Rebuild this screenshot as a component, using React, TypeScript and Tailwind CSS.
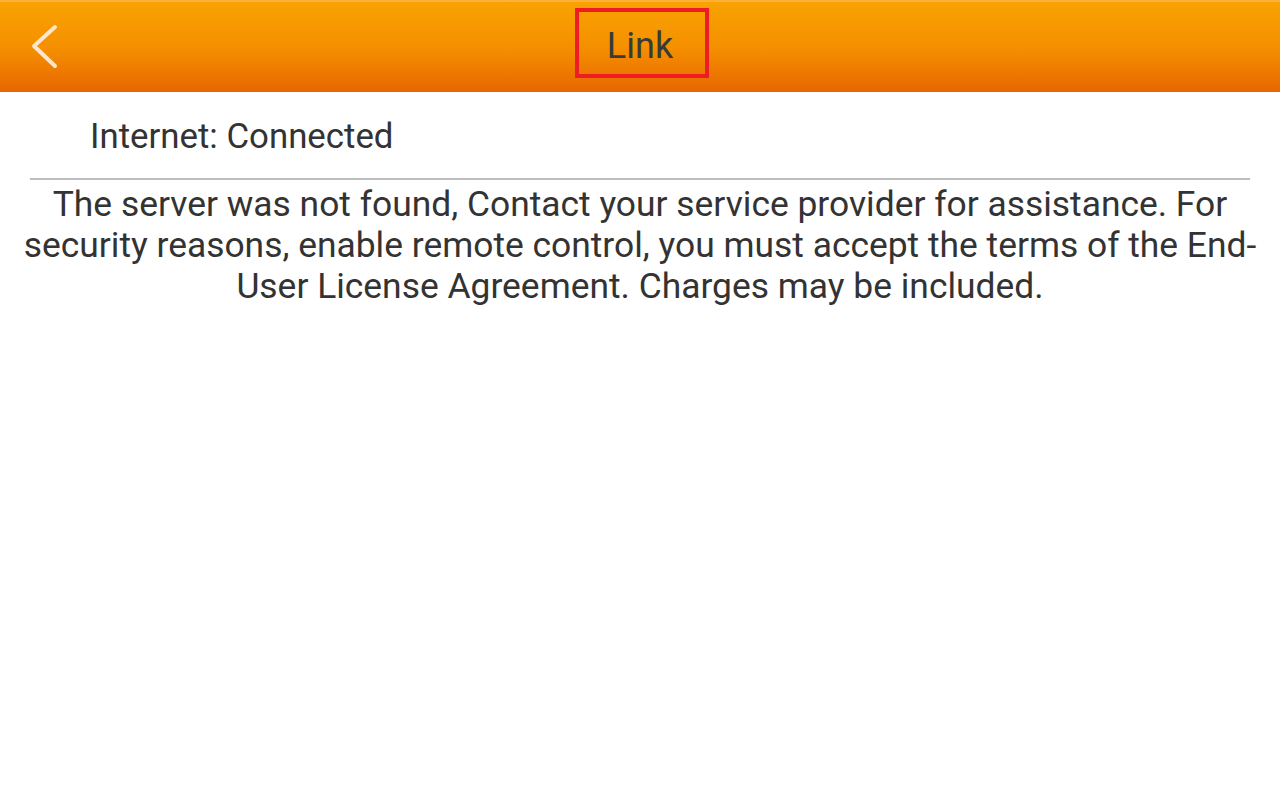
import React from 'react';

const App: React.FC = () => {
  return (
    <div className="w-[1280px] h-[800px] bg-white" style={{ fontFamily: 'Roboto, "Noto Sans", sans-serif' }}>
      <div className="relative h-[92px] border-t-2 border-[#fbb23a] bg-gradient-to-b from-[#f9a200] via-[#f59000] to-[#e86600] flex items-start justify-center pt-[6px]">
        <button className="absolute left-[28px] top-[20px] w-[36px] h-[50px]">
          <svg width="36" height="50" viewBox="0 0 36 50" fill="none">
            <path d="M27 5 L6 24 L27 44" stroke="#fde6cc" strokeWidth="4" strokeLinecap="round" strokeLinejoin="round" />
          </svg>
        </button>
        <div className="ml-[4px] w-[134px] h-[70px] border-4 border-[#ee1c24] flex items-center justify-center pt-[5px] pr-[4px]">
          <span className="text-[36px] text-[#3a3a3a] leading-none">Link</span>
        </div>
      </div>
      <div className="pl-[90px] pt-[18px] h-[86px]">
        <p className="text-[34.8px] text-[#333333] leading-[52px]">Internet: Connected</p>
      </div>
      <div className="mx-[30px] h-[2px] bg-[#bdbdbd]" />
      <p className="px-[18px] pt-[4px] text-center text-[35.4px] leading-[41px] text-[#333333]">
        The server was not found, Contact your service provider for assistance. For security reasons, enable remote control, you must accept the terms of the End-User License Agreement. Charges may be included.
      </p>
    </div>
  );
};

export default App;
